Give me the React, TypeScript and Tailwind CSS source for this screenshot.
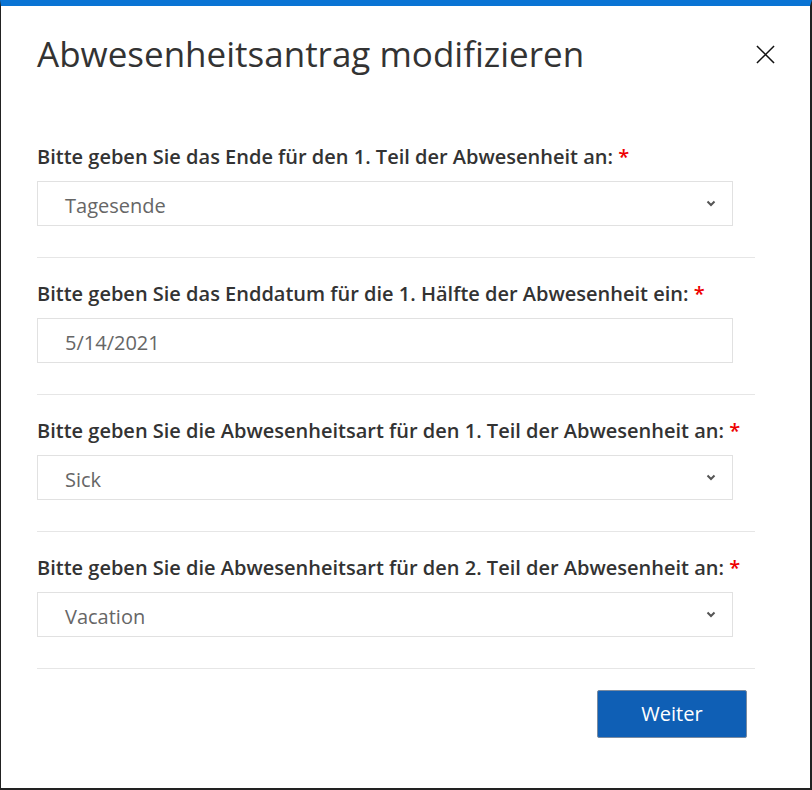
import React from "react";

const font = { fontFamily: '"Open Sans", "Noto Sans", sans-serif' };

function Chevron() {
  return (
    <svg width="10" height="7" viewBox="0 0 10 7" className="text-[#555]">
      <path d="M1.5 1.5 L5 5 L8.5 1.5" fill="none" stroke="currentColor" strokeWidth="2" />
    </svg>
  );
}

function Section({ label, value, select }: { label: string; value: string; select?: boolean }) {
  return (
    <div className="border-b border-[#e6e6e6] pt-[24px] pb-[31px]">
      <div className="text-[20px] font-semibold text-[#333] leading-[24px]">
        {label} <span className="text-[#e00]">*</span>
      </div>
      <div className="mt-[12px] w-[696px] h-[45px] border border-[#e1e1e1] flex items-center justify-between pl-[27px] pr-[16px]">
        <span className="text-[20px] text-[#666] pt-[4px]">{value}</span>
        {select && <Chevron />}
      </div>
    </div>
  );
}

export default function App() {
  return (
    <div className="w-[812px] h-[790px] bg-white" style={font}>
      <div className="w-full h-full border-t-[6px] border-t-[#0a74d4] border-l border-r-2 border-b-2 border-l-[#222] border-r-[#222] border-b-[#222] flex flex-col">
        <div className="flex items-start justify-between pl-[36px] pr-[35px] pt-[26px]">
          <h1 className="text-[35px] leading-[44px] text-[#333] font-medium">
            Abwesenheitsantrag modifizieren
          </h1>
          <svg width="19" height="19" viewBox="0 0 20 20" className="mt-[13px]">
            <path d="M1 1 L19 19 M19 1 L1 19" stroke="#111" strokeWidth="1.6" fill="none" />
          </svg>
        </div>
        <div className="pl-[36px] w-[754px] mt-[45px]">
          <Section label="Bitte geben Sie das Ende für den 1. Teil der Abwesenheit an:" value="Tagesende" select />
          <Section label="Bitte geben Sie das Enddatum für die 1. Hälfte der Abwesenheit ein:" value="5/14/2021" />
          <Section label="Bitte geben Sie die Abwesenheitsart für den 1. Teil der Abwesenheit an:" value="Sick" select />
          <Section label="Bitte geben Sie die Abwesenheitsart für den 2. Teil der Abwesenheit an:" value="Vacation" select />
        </div>
        <div className="flex justify-end pr-[63px] mt-[21px]">
          <button className="w-[150px] h-[48px] bg-[#0f5fb5] border border-[#7a8ba0] rounded-[2px] text-white text-[20px]">
            Weiter
          </button>
        </div>
      </div>
    </div>
  );
}
